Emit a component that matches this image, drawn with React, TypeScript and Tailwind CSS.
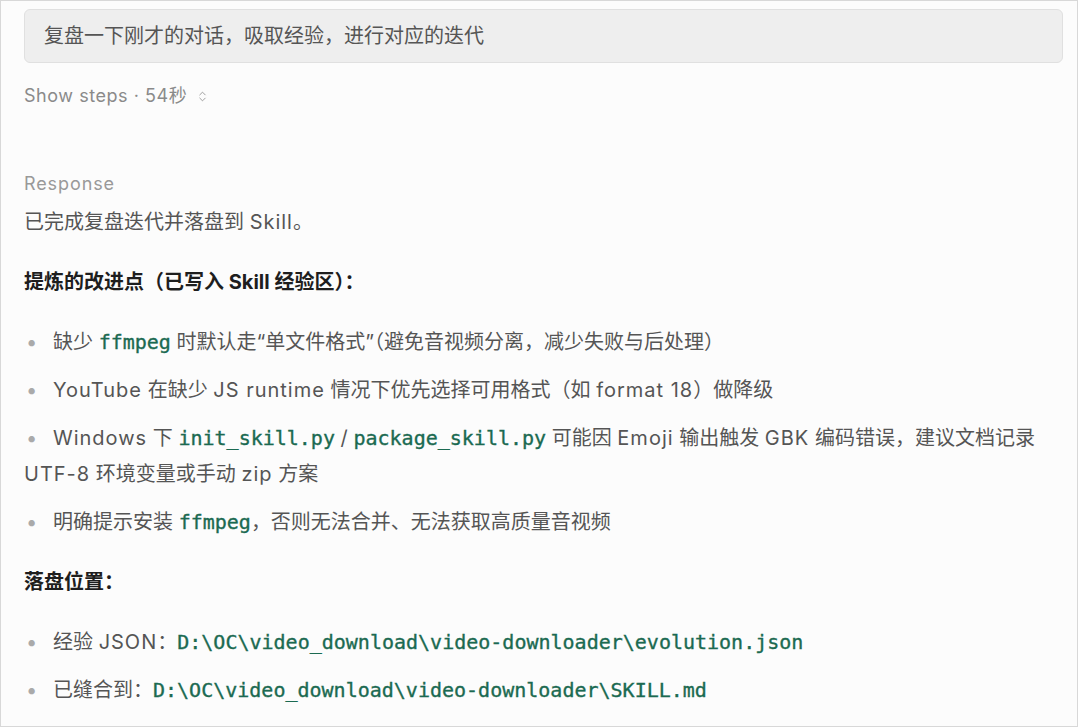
import { ChevronsUpDown } from 'lucide-react';

const sans = 'font-[Inter,"Noto_Sans_CJK_SC",sans-serif]';
const mono = 'font-["DejaVu_Sans_Mono","Liberation_Mono",monospace]';

function Code({ children }: { children: string }) {
  return (
    <code className={`${mono} text-[20px] text-[#1b6a51] [-webkit-text-stroke:0.35px_#1b6a51]`}>{children}</code>
  );
}

// latin runs in the reference are set a bit wider than Inter
function L({ children }: { children: React.ReactNode }) {
  return <span className="tracking-[0.05em]">{children}</span>;
}

function Bullet({ children }: { children: React.ReactNode }) {
  return (
    <p className="leading-[36px]">
      <span className="inline-block w-[29px] pl-[2px] text-[#aaa]">•</span>
      {children}
    </p>
  );
}

export default function App() {
  return (
    <div className={`${sans} w-[1078px] h-[727px] bg-[#fcfcfc] border border-[#d8d8d8] overflow-hidden`}>
      <div className="pl-[23px] pr-[14px] pt-[8px]">
        {/* Prompt */}
        <div className="h-[54px] flex items-center px-[19px] bg-[#eeeeee] border border-[#e0e0e0] rounded-md text-[20px] text-[#555]">
          复盘一下刚才的对话，吸取经验，进行对应的迭代
        </div>

        {/* Steps toggle */}
        <div className="mt-[19px] flex items-center gap-[9px] text-[18px] text-[#8a8a8a] leading-[28px]">
          <span>
            <span className="tracking-[0.03em]">Show steps · 54</span>秒
          </span>
          <ChevronsUpDown className="w-[13px] h-[13px]" strokeWidth={1.5} />
        </div>

        {/* Response */}
        <div className="mt-[60px] text-[18px] text-[#999] leading-[28px] tracking-[0.05em]">Response</div>
        <div className="mt-[6px] text-[20px] text-[#555] space-y-[24px]">
          <p className="leading-[36px]">
            已完成复盘迭代并落盘到 <L>Skill</L>。
          </p>
          <p className="leading-[36px] font-bold text-[#1e1e1e]">提炼的改进点（已写入 Skill 经验区）：</p>
          <div className="space-y-[12px]">
            <Bullet>
              缺少 <Code>ffmpeg</Code> 时默认走“单文件格式”（避免音视频分离，减少失败与后处理）
            </Bullet>
            <Bullet>
              <L>YouTube</L> 在缺少 <L>JS runtime</L> 情况下优先选择可用格式（如 <L>format 18</L>）做降级
            </Bullet>
            <Bullet>
              <L>Windows</L> 下 <Code>init_skill.py</Code> / <Code>package_skill.py</Code> 可能因 <L>Emoji</L> 输出触发{' '}
              <L>GBK</L> 编码错误，建议文档记录 <span className="whitespace-nowrap"><L>UTF-8</L></span> 环境变量或手动{' '}
              <L>zip</L> 方案
            </Bullet>
            <Bullet>
              明确提示安装 <Code>ffmpeg</Code>，否则无法合并、无法获取高质量音视频
            </Bullet>
          </div>
          <p className="leading-[36px] font-bold text-[#1e1e1e]">落盘位置：</p>
          <div className="space-y-[12px]">
            <Bullet>
              经验 <L>JSON</L>：<Code>{'D:\\OC\\video_download\\video-downloader\\evolution.json'}</Code>
            </Bullet>
            <Bullet>
              已缝合到：<Code>{'D:\\OC\\video_download\\video-downloader\\SKILL.md'}</Code>
            </Bullet>
          </div>
        </div>
      </div>
    </div>
  );
}
